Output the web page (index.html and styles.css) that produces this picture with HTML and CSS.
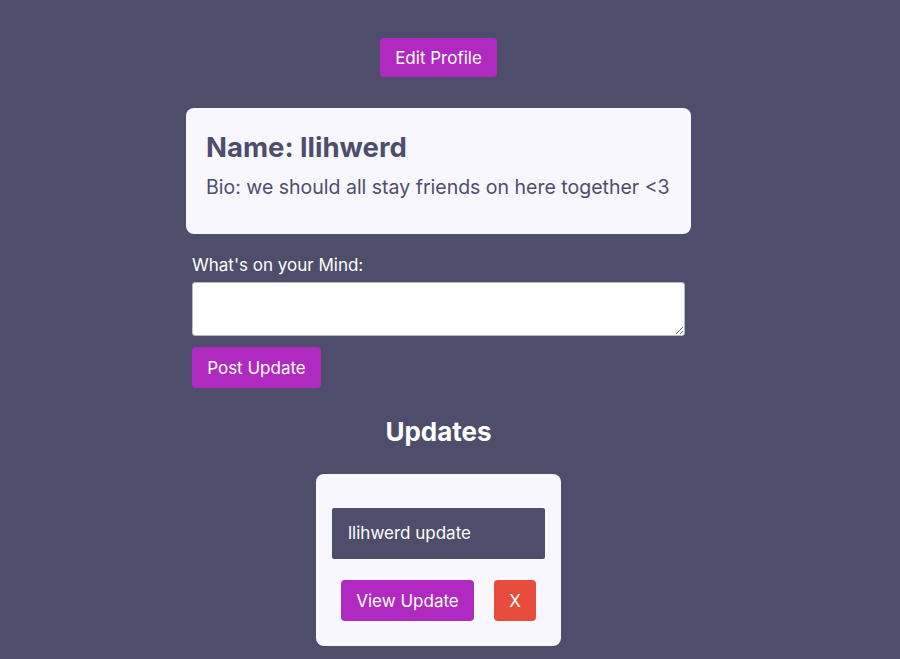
FILE: index.html
```html
<!DOCTYPE html>
<html>
<head>
<meta charset="utf-8">
<link rel="stylesheet" href="styles.css">
</head>
<body>
<div class="page">
  <button class="btn edit-btn">Edit Profile</button>
  <div class="profile-card">
    <h2 class="name">Name: llihwerd</h2>
    <p class="bio">Bio: we should all stay friends on here together &lt;3</p>
  </div>
  <form class="post-form">
    <label class="label">What's on your Mind:</label>
    <textarea class="textarea"></textarea>
    <button type="button" class="btn post-btn">Post Update</button>
  </form>
  <h2 class="updates-title">Updates</h2>
  <div class="update-card">
    <div class="update-text">llihwerd update</div>
    <div class="update-actions">
      <button class="btn view-btn">View Update</button>
      <button class="btn del-btn">X</button>
    </div>
  </div>
</div>
</body>
</html>
```
FILE: styles.css
```css
html, body {
  margin: 0;
  padding: 0;
  background: #4e4e6c;
  font-family: Inter, "Noto Sans", sans-serif;
}
.page {
  width: 877px;
  display: flex;
  flex-direction: column;
  align-items: center;
  padding-top: 38px;
}
.btn {
  font-family: Inter, "Noto Sans", sans-serif;
  border: none;
  border-radius: 4px;
  color: #ffffff;
  background: #b02ac1;
  font-size: 17px;
  cursor: pointer;
  padding: 0 15px;
}
.edit-btn {
  height: 39px;
  width: 117px;
}
.profile-card {
  margin-top: 31px;
  width: 505px;
  height: 126px;
  box-sizing: border-box;
  background: #f7f7fd;
  border-radius: 8px;
  padding: 22px 20px;
  color: #4e4e6c;
}
.name {
  margin: 0;
  font-size: 27.5px;
  font-weight: 700;
  line-height: 34px;
}
.bio {
  margin: 10px 0 0;
  font-size: 19.5px;
  line-height: 27px;
}
.post-form {
  width: 493px;
  margin-top: 20px;
  display: flex;
  flex-direction: column;
  align-items: flex-start;
}
.label {
  color: #ffffff;
  font-size: 17px;
  line-height: 22px;
}
.textarea {
  margin-top: 6px;
  width: 493px;
  height: 54px;
  box-sizing: border-box;
  border: 1px solid #b8b8c0;
  border-radius: 3px;
  background: #ffffff;
}
.post-btn {
  margin-top: 11px;
  height: 41px;
  width: 129px;
}
.updates-title {
  margin: 28px 0 0;
  color: #ffffff;
  font-size: 26px;
  font-weight: 700;
  line-height: 32px;
}
.update-card {
  margin-top: 26px;
  width: 245px;
  height: 172px;
  box-sizing: border-box;
  background: #f7f7fd;
  border-radius: 8px;
  padding: 34px 16px 0;
}
.update-text {
  height: 51px;
  background: #4e4e6c;
  border-radius: 2px;
  color: #ffffff;
  font-size: 17px;
  line-height: 51px;
  padding: 0 16px;
}
.update-actions {
  margin-top: 21px;
  display: flex;
  justify-content: center;
  gap: 20px;
}
.view-btn {
  height: 41px;
  width: 133px;
}
.del-btn {
  height: 41px;
  width: 42px;
  padding: 0;
  background: #e84c3d;
}
```
